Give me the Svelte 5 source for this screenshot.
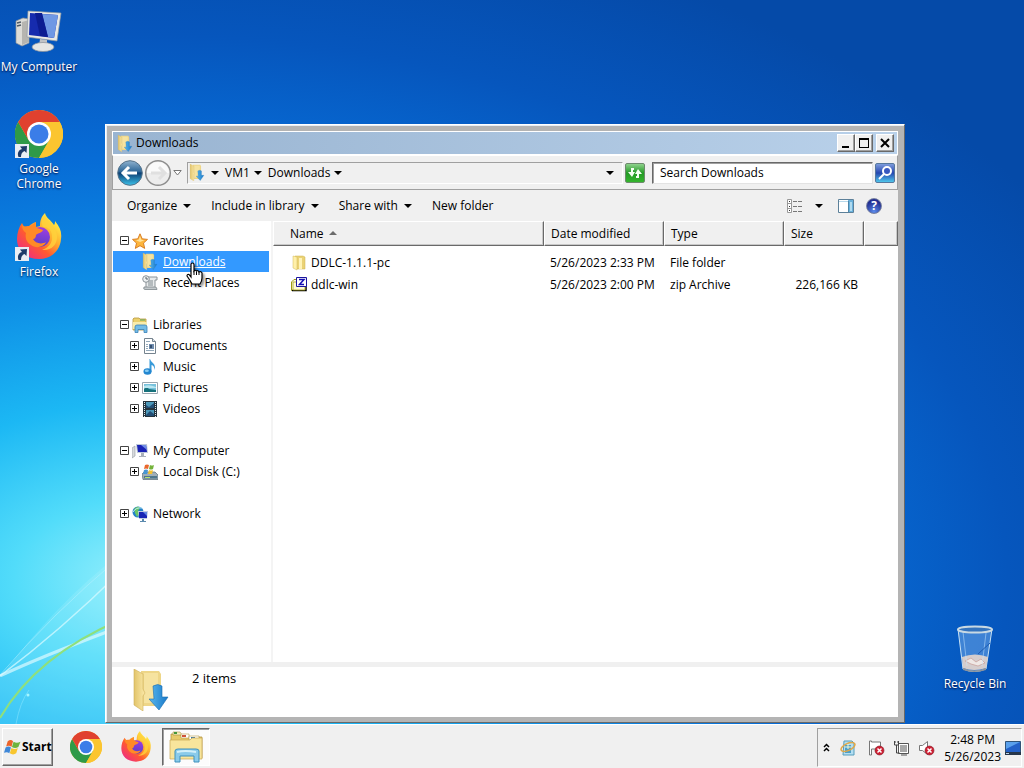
<script lang="ts">
  type TreeItem = { label: string; icon: string; toggle?: string };
  type TreeGroup = { label: string; icon: string; open: boolean; items: TreeItem[] };

  const groups: TreeGroup[] = [
    {
      label: 'Favorites', icon: 'star', open: true,
      items: [
        { label: 'Downloads', icon: 'downloads' },
        { label: 'Recent Places', icon: 'recent' }
      ]
    },
    {
      label: 'Libraries', icon: 'libraries', open: true,
      items: [
        { label: 'Documents', icon: 'document', toggle: '+' },
        { label: 'Music', icon: 'music', toggle: '+' },
        { label: 'Pictures', icon: 'picture', toggle: '+' },
        { label: 'Videos', icon: 'video', toggle: '+' }
      ]
    },
    {
      label: 'My Computer', icon: 'computer', open: true,
      items: [{ label: 'Local Disk (C:)', icon: 'disk', toggle: '+' }]
    },
    { label: 'Network', icon: 'network', open: false, items: [] }
  ];

  const files = [
    { name: 'DDLC-1.1.1-pc', icon: 'folder', date: '5/26/2023 2:33 PM', type: 'File folder', size: '' },
    { name: 'ddlc-win', icon: 'zip', date: '5/26/2023 2:00 PM', type: 'zip Archive', size: '226,166 KB' }
  ];

  let selected = $state('Downloads');
  let query = $state('');
</script>

{#snippet caret()}
  <svg class="caret" width="8" height="4" viewBox="0 0 8 4"><path d="M0 0h8L4 4z" fill="#000" /></svg>
{/snippet}

{#snippet chrome(size)}
  <svg width={size} height={size} viewBox="0 0 48 48">
    <circle cx="24" cy="24" r="24" fill="#f9c22e" />
    <path d="M3.2 12A24 24 0 0 0 24 48L34.4 30 24 24 13.6 30z" fill="#2f9a48" />
    <path d="M24 24V12h20.8A24 24 0 0 1 24 48L34.4 30z" fill="#fbc530" />
    <path d="M3.2 12A24 24 0 0 1 44.8 12H24L13.6 30z" fill="#e0412f" />
    <circle cx="24" cy="24" r="12" fill="#fff" />
    <circle cx="24" cy="24" r="9.5" fill="#3b7de8" />
  </svg>
{/snippet}

{#snippet firefox(size)}
  <svg width={size} height={size} viewBox="0 0 48 48">
    <defs>
      <linearGradient id="fx-body" x1="0.85" y1="0.1" x2="0.15" y2="0.9">
        <stop offset="0" stop-color="#fff04a" />
        <stop offset="0.35" stop-color="#ffb02e" />
        <stop offset="0.65" stop-color="#ff5a30" />
        <stop offset="1" stop-color="#f0307a" />
      </linearGradient>
      <linearGradient id="fx-globe" x1="0.6" y1="0" x2="0.4" y2="1">
        <stop offset="0" stop-color="#a03ce0" />
        <stop offset="1" stop-color="#5440c8" />
      </linearGradient>
    </defs>
    <path d="M30 0c1 5 6 7 9 12 1-1 1-3 1-4 5 6 7 11 6 18-1 13-11 20-22 20C11 46 2 38 2 26 2 20 4 14 7 10l2 4c2-1 3-1 5-1 2-2 4-3 7-4l0 5 4-1c0-5 1-9 5-13z" fill="url(#fx-body)" />
    <circle cx="25" cy="24" r="10" fill="url(#fx-globe)" />
    <path d="M7 12c3 2 5 2 8 2 2-2 4-4 6-5-1 3 0 5 1 6l6 2c-1 3-5 3-7 5 0 2-1 4-3 4 2 4 8 6 13 3-2 5-10 7-15 3-5-3-6-8-5-12-3-2-4-5-4-8z" fill="#ff8a26" />
    <path d="M30 2c-4 4-4 8-2 12 5 0 9 3 9 9 1 7-4 12-10 14 9 1 15-5 15-13 0-6-3-9-6-13-2-3-6-5-6-9z" fill="#ffd23c" opacity=".8" />
  </svg>
{/snippet}

{#snippet shortcut()}
  <svg class="shortcut" width="14" height="14" viewBox="0 0 14 14">
    <path d="M0 0h14v14H0z" fill="#e9eef4" />
    <path d="M3.500 13C2 9 3.500 6 7 5L5 2.500 12 2l-.5 7-2-2C7 8 6 10 6 13z" fill="#1c3a68" />
  </svg>
{/snippet}

{#snippet downloads(w, h)}
  <svg width={w} height={h} viewBox="0 0 36 42">
    <defs>
      <linearGradient id="dl-front" x1="0" x2="1">
        <stop offset="0" stop-color="#e2c46a" />
        <stop offset="1" stop-color="#fbe9a8" />
      </linearGradient>
      <linearGradient id="dl-arrow" x1="0" x2="1">
        <stop offset="0" stop-color="#5ab8ee" />
        <stop offset="1" stop-color="#1878c8" />
      </linearGradient>
    </defs>
    <path d="M8 2h18l2 3v32H10z" fill="#eed688" />
    <path d="M11 4h14v30H11z" fill="#f6e3a0" />
    <path d="M1 0l9 5v15l2 4-2 3v15L1 36z" fill="url(#dl-front)" stroke="#cfae58" stroke-width="0.6" />
    <path d="M20 17q5-3 9 0v11h6L26 41 16 30h5z" fill="url(#dl-arrow)" stroke="#1a6cae" stroke-width="0.6" />
  </svg>
{/snippet}

{#snippet icon(name)}
  {#if name === 'downloads'}
    {@render downloads(16, 17)}
  {:else}
    <svg width="16" height="16" viewBox="0 0 16 16">
      {#if name === 'star'}
        <path d="M8 .8l2.200 5 5.300.6-4 3.700 1.200 5.300L8 12.700l-4.700 2.700 1.200-5.300-4-3.700 5.300-.6z" fill="#fdb53c" stroke="#d5761b" stroke-width=".9" />
        <path d="M8 3l1.300 3.700 3 .5L8 9 4 7.200l2.800-.6z" fill="#ffe29a" />
      {:else if name === 'recent'}
        <path d="M5 2h10v3h-2v8H4V7z" fill="#e8ebec" stroke="#8b9398" />
        <path d="M2 12h11q2 0 2 2.500H3q-2 0-1-2.500z" fill="#c4cacd" stroke="#7d868b" stroke-width=".8" />
        <path d="M6 6h5M6 8h5M6 10h5" stroke="#818b90" />
        <circle cx="4" cy="4" r="3.300" fill="#eef1f2" stroke="#8b9398" />
        <path d="M4 2v2h2" fill="none" stroke="#59646a" />
      {:else if name === 'libraries'}
        <path d="M1 2l1-1h5l1 1h6v11H1z" fill="#ecd06c" stroke="#b89840" stroke-width=".8" />
        <path d="M1 5h14v7H1z" fill="#faecab" />
        <path d="M8 3h5" stroke="#59a560" />
        <path d="M3 15.500V10q0-2 2-2h8q2 0 2 2v5.500h-3v-3H6v3z" fill="#74bce6" stroke="#3881b7" stroke-width=".8" />
      {:else if name === 'document'}
        <path d="M2.500.5h8l3 3v12h-11z" fill="#fff" stroke="#75838e" />
        <path d="M10.500.5v3h3" fill="#dde4e9" stroke="#75838e" />
        <path d="M4 3.500h4M4 6.500h2M4 8.500h2M4 10.500h2M4 12.500h8" stroke="#93a9ba" />
        <path d="M7 6h5v5H7z" fill="#6f8cae" />
        <path d="M8 7h2v3H8z" fill="#35506f" />
      {:else if name === 'music'}
        <path d="M8 0c1 4 6.500 4 4.500 11-.2-3-1-4.500-3-5v7H7.500V0z" fill="#399bd9" />
        <ellipse cx="5.500" cy="12.500" rx="4" ry="3.300" fill="#2387d0" />
        <ellipse cx="4.800" cy="11.700" rx="2" ry="1.200" fill="#89cdf4" />
      {:else if name === 'picture'}
        <path d="M.5 2.500h15v11H.5z" fill="#fff" stroke="#9aa7b0" />
        <path d="M2 4h12v8H2z" fill="#76c1dc" />
        <path d="M2 9q3-3 5 0l7 1v2H2z" fill="#16717b" />
        <path d="M2 6q5-2 12 1v1H2z" fill="#b9e6f0" />
      {:else if name === 'video'}
        <path d="M1 0h14v16H1z" fill="#26343d" />
        <path d="M4 1h8v6H4zM4 9h8v6H4z" fill="#4b98ba" />
        <path d="M4 4l3 2 5-4v5H4zM4 14l4-4 4 3v2H4z" fill="#234e75" />
        <path d="M2.500 1v15M13.500 1v15" stroke="#dfe9ed" stroke-dasharray="1 1" />
      {:else if name === 'computer'}
        <path d="M0 5l3-2v10l-3 2z" fill="#d8dadd" stroke="#92989f" stroke-width=".6" />
        <path d="M4 1h11l1 9H5z" fill="#bdc8d9" />
        <path d="M5 2h9l1 7H6z" fill="#1a22b5" />
        <path d="M9 2h5l1 5z" fill="#708ce6" />
        <path d="M9 10h3v3h2v1H7v-1h2z" fill="#a9b0ba" />
      {:else if name === 'disk'}
        <path d="M0 10l2-2h11l3 3v4.500H1z" fill="#9faeb8" stroke="#566a77" stroke-width=".7" />
        <path d="M2 12h13v2.500H2z" fill="#4f768c" />
        <path d="M3 13.500h5" stroke="#b4e16c" />
        <path d="M3 1q2-1 4 0L6 5Q4 4 2 5z" fill="#ea672d" />
        <path d="M8 1q2 1 4 0l-1 4Q9 6 7 5z" fill="#74b33a" />
        <path d="M2 6q2-1 4 0l-1 4H1z" fill="#4896d3" />
        <path d="M7 6q2 1 4 0l-1 4H6z" fill="#f4c02d" />
      {:else if name === 'network'}
        <circle cx="6" cy="6" r="5.500" fill="#2381c9" />
        <path d="M2 3q4-4 6-1L6 5l2 2-3 4-2-4z" fill="#69c667" />
        <path d="M1 6q3-5 9-4" stroke="#bce9f6" fill="none" />
        <path d="M6 5h10l-1 8H7z" fill="#bdcbe1" />
        <path d="M7 6h8v6H7z" fill="#1726b5" />
        <path d="M11 6h4v4z" fill="#6287e3" />
        <path d="M10 13h2v2h2v1H8v-1h2z" fill="#5b8aae" />
      {:else if name === 'folder'}
        <path d="M4 1h8l2 1v12H5z" fill="#ead276" stroke="#cdb24e" stroke-width=".5" />
        <path d="M2 1l4 1v13l-4-2z" fill="#fff0a9" stroke="#d2b85b" stroke-width=".5" />
        <path d="M8 3h3v11H8z" fill="#fff3b8" />
      {:else if name === 'zip'}
        <path d="M.5 5L3 2.500h4v11H.5z" fill="#fffce2" stroke="#9e9b13" />
        <path d="M1 13.500h14V9" fill="none" stroke="#000" stroke-width="1.500" />
        <path d="M2 5h12v8H2z" fill="#fffbd1" stroke="#a5a31d" stroke-width=".8" />
        <path d="M5.500.5h10v9h-10z" fill="#fff" stroke="#1b159d" />
        <path d="M8 2.500h5L8.500 7.500H13" fill="none" stroke="#150fb5" stroke-width="1.500" />
      {/if}
    </svg>
  {/if}
{/snippet}

{#snippet toggle(sign)}
  <svg class="toggle" width="9" height="9" viewBox="0 0 9 9">
    <path d="M.5.5h8v8h-8z" fill="#fff" stroke="#444" />
    <path d={sign === '+' ? 'M2 4.500h5M4.500 2v5' : 'M2 4.500h5'} stroke="#000" />
  </svg>
{/snippet}

{#snippet flag(size)}
  <svg width={size} height={size} viewBox="0 0 16 16">
    <path d="M3.500 2q3-2 5 0L7 7.500Q5 5.500 2 7z" fill="#ec642b" />
    <path d="M9 2.500q3 2 6.500 0l-2 5q-3 2-6 0z" fill="#6fb43d" />
    <path d="M1.500 8q3-2 5 0L5 13.500q-2-2-5-.5z" fill="#3f88d8" />
    <path d="M7 8.500q3 2 6 0l-1.500 5q-3 2-6 0z" fill="#f8c62e" />
  </svg>
{/snippet}

<div class="screen">
  <main class="desktop">
    <svg class="wisps" width="240" height="240" viewBox="0 0 240 240">
      <path d="M0 194Q55 120 120 70V240H0z" fill="#c7fbff" opacity=".16" />
      <path d="M0 192Q60 147 120 88" fill="none" stroke="#d5faff" stroke-width="1.500" opacity=".75" />
      <path d="M0 191Q52 130 120 73" fill="none" stroke="#b7f2ff" opacity=".5" />
      <path d="M0 192Q40 173 120 143" fill="none" stroke="#e8fcff" stroke-width="3" opacity=".65" />
      <path d="M0 234Q36 172 120 136" fill="none" stroke="#8fe07c" stroke-width="2" />
      <path d="M16 240Q20 218 29 206" fill="none" stroke="#91eaff" opacity=".5" />
      <circle cx="28" cy="211" r="1.500" fill="#a5f6ff" />
    </svg>

    <button class="shortcut-tile computer">
      <span class="art">
        <svg width="48" height="48" viewBox="0 0 48 48">
          <path d="M1 13l7-3 6 1v24l-7 3-6-3z" fill="#dddcd7" stroke="#8e9297" stroke-width=".7" />
          <path d="M7 14v23l7-3V12z" fill="#b6b5b0" />
          <path d="M2 15l4-1M2 18l4-1" stroke="#4e5965" stroke-width="1.500" />
          <path d="M13 3l33 2-4 28-30-4z" fill="#e9e9e5" stroke="#9199a2" stroke-width=".7" />
          <path d="M15 5l28 2-4 23-25-3z" fill="#162bae" />
          <path d="M27 6l16 1-4 23-6-1z" fill="#6f98e4" />
          <path d="M20 5h7l6 24-8-1z" fill="#0c1c91" />
          <path d="M25 31l7 1v6h-8z" fill="#bfc2c5" />
          <ellipse cx="28" cy="39" rx="11" ry="4.500" fill="#e5e6e4" stroke="#888e96" stroke-width=".7" />
        </svg>
      </span>
      <span>My Computer</span>
    </button>
    <button class="shortcut-tile google">
      <span class="art">{@render chrome(48)}{@render shortcut()}</span>
      <span>Google<br />Chrome</span>
    </button>
    <button class="shortcut-tile fox">
      <span class="art">{@render firefox(48)}{@render shortcut()}</span>
      <span>Firefox</span>
    </button>
    <button class="shortcut-tile bin">
      <span class="art">
        <svg width="48" height="48" viewBox="0 0 48 48">
          <path d="M7 4l5 40q11 5 23 0l6-40z" fill="#6ea5e5" fill-opacity=".55" stroke="#c8e2f4" />
          <path d="M11 32q13-5 26 0l-2 11q-12 4-23 0z" fill="#d5cdcd" />
          <path d="M14 36l6-3 5 4 5-3 4 4-7 3-7-2z" fill="#efe8e5" stroke="#c79c96" stroke-width=".7" />
          <path d="M12 7l4 34M35 8l-4 33" stroke="#c8e8ff" opacity=".5" />
          <path d="M27 29L39 18" stroke="#1c5bb2" />
          <ellipse cx="24" cy="4.500" rx="17" ry="3" fill="#3473bd" stroke="#c9d9e3" stroke-width="2" />
          <path d="M12 43q12 5 23 0v2q-12 4-23 0z" fill="#8b929a" />
        </svg>
      </span>
      <span>Recycle Bin</span>
    </button>

    <section class="window" aria-label="Downloads">
      <header class="titlebar">
        {@render downloads(16, 17)}
        <h1>Downloads</h1>
        <button aria-label="Minimize"><svg width="12" height="12" viewBox="0 0 12 12"><path d="M2 9h7v2H2z" /></svg></button>
        <button aria-label="Maximize"><svg width="12" height="12" viewBox="0 0 12 12"><path d="M1 1h10v10H1zM2 3v7h8V3z" fill-rule="evenodd" /></svg></button>
        <button class="close" aria-label="Close"><svg width="12" height="12" viewBox="0 0 12 12"><path d="M2 2l8 8M10 2l-8 8" stroke="#000" stroke-width="2" /></svg></button>
      </header>

      <nav class="navbar">
        <div class="travel">
          <button aria-label="Back">
            <svg width="26" height="26" viewBox="0 0 26 26">
              <defs>
                <linearGradient id="back-fill" x2="0" y2="1">
                  <stop offset="0" stop-color="#8fb2cf" />
                  <stop offset=".45" stop-color="#2c6697" />
                  <stop offset=".5" stop-color="#0c3f73" />
                  <stop offset="1" stop-color="#3cc1ea" />
                </linearGradient>
              </defs>
              <circle cx="13" cy="13" r="12.300" fill="url(#back-fill)" stroke="#547188" />
              <path d="M12 7l-6 6 6 6M7 13h13" fill="none" stroke="#fff" stroke-width="3" />
            </svg>
          </button>
          <button aria-label="Forward">
            <svg width="28" height="28" viewBox="0 0 28 28">
              <circle cx="14" cy="14" r="12.300" fill="#ededed" stroke="#8e8e8e" stroke-width="1.500" />
              <path d="M3 14a11 11 0 0 1 22 0z" fill="#fafafa" />
              <path d="M15 8l6 6-6 6M20 14H7" fill="none" stroke="#e0e0e0" stroke-width="3" />
            </svg>
          </button>
          <button aria-label="Recent pages">
            <svg width="9" height="6" viewBox="0 0 9 6"><path d="M.8.5h7.400L4.500 5z" fill="#fff" stroke="#777" /></svg>
          </button>
        </div>
        <div class="address">
          {@render downloads(16, 17)}
          <button aria-label="Locations">{@render caret()}</button>
          <button>VM1 {@render caret()}</button>
          <button>Downloads {@render caret()}</button>
          <button class="history" aria-label="Previous locations">{@render caret()}</button>
        </div>
        <button class="refresh" aria-label="Refresh">
          <svg width="18" height="18" viewBox="0 0 18 18">
            <path d="M8 4H5v4H2l4 5 3-5H7V6h1z" fill="#f4fff2" />
            <path d="M10 14h3v-4h3l-4-5-3 5h2v2h-1z" fill="#f4fff2" />
          </svg>
        </button>
        <input type="search" aria-label="Search Downloads" placeholder="Search Downloads" bind:value={query} />
        <button class="find" aria-label="Search">
          <svg width="18" height="18" viewBox="0 0 18 18">
            <circle cx="11" cy="7" r="4" fill="#3858c0" stroke="#fff" stroke-width="2" />
            <path d="M8 10l-5 5" stroke="#fff" stroke-width="2" />
          </svg>
        </button>
      </nav>

      <div class="toolbar">
        <button>Organize {@render caret()}</button>
        <button>Include in library {@render caret()}</button>
        <button>Share with {@render caret()}</button>
        <button>New folder</button>
        <button class="view" aria-label="Change your view">
          <svg width="16" height="14" viewBox="0 0 16 14">
            <path d="M.5.500h4v13h-4zM.500 4.500h4M.500 9.500h4" fill="#fff" stroke="#999" />
            <path d="M2 2.500h1M2 7.500h1M2 11.500h1" stroke="#333" />
            <path d="M6 2.500h4M11 2.500h4M6 7.500h4M11 7.500h4M6 12.500h4M11 12.500h4" stroke="#777" />
          </svg>
          {@render caret()}
        </button>
        <button class="preview" aria-label="Show the preview pane">
          <svg width="16" height="14" viewBox="0 0 16 14">
            <path d="M.5.500h15v13H.5z" fill="#fff" stroke="#5c8099" />
            <path d="M1 2.500h9" stroke="#b7d8ea" />
            <path d="M10 1h5v12h-5z" fill="#69b1dc" />
            <path d="M10.500 2v11" stroke="#4e86a8" />
            <path d="M12 3h2v9h-2z" fill="#b0dbf0" />
          </svg>
        </button>
        <button class="help" aria-label="Help">
          <span>?</span>
        </button>
      </div>

      <div class="panes">
        <aside class="sidebar">
          <ul>
            {#each groups as group}
              <li class="group">
                <button class="node">
                  {@render toggle(group.open ? '-' : '+')}
                  {@render icon(group.icon)}
                  <span>{group.label}</span>
                </button>
                {#if group.items.length}
                  <ul>
                    {#each group.items as item}
                      <li>
                        <button class="node child" class:selected={selected === item.label} onclick={() => (selected = item.label)}>
                          {#if item.toggle}{@render toggle(item.toggle)}{:else}<i class="toggle"></i>{/if}
                          {@render icon(item.icon)}
                          <span>{item.label}</span>
                        </button>
                      </li>
                    {/each}
                  </ul>
                {/if}
              </li>
            {/each}
          </ul>
        </aside>

        <div class="listing">
          <table>
            <colgroup>
              <col class="name-col" />
              <col class="wide-col" />
              <col class="wide-col" />
              <col class="size-col" />
              <col />
            </colgroup>
            <thead>
              <tr>
                <th>Name <svg class="sort" width="8" height="4" viewBox="0 0 8 4"><path d="M4 0l4 4H0z" fill="#6b6b6b" /></svg></th>
                <th>Date modified</th>
                <th>Type</th>
                <th>Size</th>
                <td></td>
              </tr>
            </thead>
            <tbody>
              {#each files as file}
                <tr>
                  <td><span class="file">{@render icon(file.icon)}{file.name}</span></td>
                  <td>{file.date}</td>
                  <td>{file.type}</td>
                  <td class="size">{file.size}</td>
                  <td></td>
                </tr>
              {/each}
            </tbody>
          </table>
        </div>
      </div>

      <footer class="details">
        {@render downloads(36, 42)}
        <p>{files.length} items</p>
      </footer>
    </section>

    <svg class="pointer" width="19" height="24" viewBox="0 0 19 24">
      <path d="M5 15V2.500Q5 1 6.500 1T8 2.500V9q1-1.500 2.500 0Q12 8 13 10q2-1 3 1v5q0 3-2 6H6Q4 18 1 14q0-2 2-1.500z" fill="#fff" stroke="#000" stroke-width="1.200" />
      <path d="M8 9v4M10.500 9.500V13M13 10v3" stroke="#000" />
    </svg>
  </main>

  <footer class="taskbar">
    <button class="start">{@render flag(17)}Start</button>
    <button class="task" aria-label="Google Chrome">{@render chrome(32)}</button>
    <button class="task" aria-label="Firefox">{@render firefox(32)}</button>
    <button class="task active" aria-label="Windows Explorer">
      <svg width="34" height="32" viewBox="0 0 34 32">
        <path d="M2 3h9l2 3h20v21H2z" fill="#e8cb6b" stroke="#b69743" stroke-width=".8" />
        <path d="M4 1h7l2 3H4z" fill="#f6efbc" stroke="#a68f40" stroke-width=".6" />
        <path d="M5 2h3" stroke="#44963a" stroke-width="2" />
        <path d="M12 3h8v4h-8z" fill="#fff" stroke="#b69743" stroke-width=".6" />
        <path d="M13 5h4" stroke="#ce533b" stroke-width="2" />
        <path d="M20 5h10v4H20z" fill="#fff" stroke="#b69743" stroke-width=".6" />
        <path d="M22 7h4" stroke="#3979a9" stroke-width="2" />
        <path d="M1 9h20l2-2h10v21H1z" fill="#f8e59c" stroke="#c7a853" stroke-width=".7" />
        <path d="M6 31V20q0-2 3-2h18q3 0 3 2v11h-5v-6H11v6z" fill="#8acbea" stroke="#3f91bd" />
        <path d="M8 21q8-2 19 0" fill="none" stroke="#d3f0fa" stroke-width="2" />
      </svg>
    </button>

    <div class="tray">
      <button aria-label="Show hidden icons">
        <svg width="7" height="9" viewBox="0 0 7 9"><path d="M1 4l2.500-2.500L6 4M1 8l2.500-2.500L6 8" fill="none" stroke="#000" stroke-width="1.500" /></svg>
      </button>
      <button class="first" aria-label="Updates">
        <svg width="16" height="16" viewBox="0 0 16 16">
          <path d="M4 1h8l2 2v12H3z" fill="#b4def1" stroke="#559dbc" />
          <path d="M5 5h6v8H5z" fill="#4c9fca" />
          <ellipse cx="8" cy="7" rx="7.500" ry="3.500" transform="rotate(-25 8 7)" fill="none" stroke="#dfa849" stroke-width="1.500" />
          <path d="M8 4v5M5 7h6" stroke="#f3f8d0" />
        </svg>
      </button>
      <button aria-label="Action Center">
        <svg width="17" height="16" viewBox="0 0 17 16">
          <path d="M1.500 1v14h2V9h9V2h-9V1z" fill="#fff" stroke="#777" />
          <circle cx="11.500" cy="10.500" r="4.500" fill="#ce1e32" stroke="#7f202a" stroke-width=".6" />
          <path d="M9.500 8.500l4 4m0-4l-4 4" stroke="#fff" stroke-width="1.500" />
        </svg>
      </button>
      <button aria-label="Network">
        <svg width="17" height="16" viewBox="0 0 17 16">
          <path d="M5.500 3.500h10v10h-10zM8 15h6" fill="#fff" stroke="#555" />
          <path d="M7 5h7v7H7z" fill="#a8a8a8" />
          <path d="M1.500 1v4h4V1M3.500 5v8h3M2 1v2M5 1v2" fill="none" stroke="#444" />
        </svg>
      </button>
      <button aria-label="Volume">
        <svg width="17" height="16" viewBox="0 0 17 16">
          <path d="M1.500 5.500h3l5-4v13l-5-4h-3z" fill="#fff" stroke="#777" />
          <circle cx="11.500" cy="10.500" r="4.500" fill="#ce1e32" stroke="#7f202a" stroke-width=".6" />
          <path d="M9.500 8.500l4 4m0-4l-4 4" stroke="#fff" stroke-width="1.500" />
        </svg>
      </button>
      <time datetime="2023-05-26T14:48">2:48 PM<br />5/26/2023</time>
      <button aria-label="Show desktop">
        <svg width="16" height="14" viewBox="0 0 16 14">
          <path d="M.5.500h15v11H.5z" fill="#2361c8" stroke="#315478" />
          <path d="M1 1h14L1 8z" fill="#5aa0ec" />
          <path d="M0 11h16v3H0z" fill="#26364a" />
          <path d="M1 12.500h3" stroke="#bcd5ec" />
        </svg>
      </button>
    </div>
  </footer>
</div>

<style>
  :global(body) {
    margin: 0;
  }
  .screen {
    display: flex;
    flex-direction: column;
    min-height: 100vh;
    overflow: hidden;
    color: #000;
    font: 12px/16px "Segoe UI", "Open Sans", "Noto Sans", sans-serif;
  }
  .screen * {
    box-sizing: border-box;
  }
  svg {
    display: block;
    flex: none;
  }
  button {
    display: flex;
    align-items: center;
    margin: 0;
    padding: 0;
    border: 0;
    background: none;
    color: inherit;
    font: inherit;
    white-space: nowrap;
  }

  /* desktop */
  .desktop {
    position: relative;
    flex: 1;
    overflow: hidden;
    background: radial-gradient(ellipse 1080px 680px at 14% 80%, #98f0fc 0%, #52dcfa 12%, #1cb8f4 26%, #0e90e6 42%, #076cd6 62%, #0656bd 80%, #054aa8 100%);
  }
  .wisps {
    position: absolute;
    left: 0;
    bottom: 0;
    width: 240px;
    height: 240px;
  }
  .shortcut-tile {
    position: absolute;
    flex-direction: column;
    width: 78px;
    color: #fff;
    line-height: 15px;
    text-align: center;
    text-shadow: 0 1px 2px #003;
  }
  .art {
    position: relative;
    margin-bottom: 3px;
  }
  .shortcut {
    position: absolute;
    left: 0;
    bottom: 0;
  }
  .computer {
    left: 0;
    top: 8px;
  }
  .google {
    left: 0;
    top: 110px;
  }
  .fox {
    left: 0;
    top: 213px;
  }
  .bin {
    right: 10px;
    top: 625px;
  }

  /* explorer window */
  .window {
    position: absolute;
    inset: 124px 119px 1px 105px;
    display: flex;
    flex-direction: column;
    padding: 6px 6px 5px;
    border: 1px solid #fff;
    border-right-color: #696969;
    border-bottom-color: #696969;
    background: #b4b4b4;
    box-shadow: inset 1px 1px #e8eef4;
  }
  .titlebar {
    display: flex;
    align-items: center;
    height: 24px;
    padding: 0 3px 0 4px;
    border: 1px solid #fff;
    background: linear-gradient(90deg, #99b4d1, #b9d1ea);
  }
  .titlebar h1 {
    flex: 1;
    margin: 0 0 0 3px;
    font-size: 12px;
    font-weight: 400;
  }
  .titlebar button {
    justify-content: center;
    width: 18px;
    height: 18px;
    border: 1px solid #fff;
    border-right-color: #696969;
    border-bottom-color: #696969;
    background: #f0f0f0;
    box-shadow: inset -1px -1px #a0a0a0;
  }
  .titlebar .close {
    margin-left: 3px;
  }
  .navbar {
    display: flex;
    align-items: center;
    height: 35px;
    padding: 0 2px 0 4px;
    border: 1px solid #a0a0a0;
    border-top-color: #fff;
    background: #f0f0f0;
  }
  .travel {
    display: flex;
    align-items: center;
    width: 70px;
    gap: 1px;
  }
  .address {
    display: flex;
    flex: 1;
    align-items: center;
    gap: 6px;
    height: 22px;
    padding: 0 8px 0 1px;
    border: 1px solid #a0a0a0;
    border-right-color: #fff;
    border-bottom-color: #fff;
  }
  .address button {
    gap: 4px;
  }
  .address .history {
    margin-left: auto;
  }
  .refresh,
  .find {
    justify-content: center;
    width: 20px;
    height: 20px;
    margin-left: 2px;
    border: 1px solid #6d8a6d;
    border-radius: 2px;
    background: linear-gradient(#8ed28c, #239a25 50%, #35b52e);
  }
  .find {
    border-color: #56789e;
    background: linear-gradient(#7d9bdc, #2546b0 50%, #4fc5ea);
  }
  input {
    flex: 0 1 221px;
    min-width: 0;
    height: 22px;
    margin-left: 7px;
    padding: 0 7px;
    border: 1px solid #e3e3e3;
    border-top-color: #696969;
    border-left-color: #696969;
    border-radius: 0;
    background: #fff;
    box-shadow: inset 1px 1px #a0a0a0;
    color: #000;
    font: inherit;
    outline: 0;
    appearance: none;
  }
  input::placeholder {
    color: #000;
    opacity: 1;
  }
  .toolbar {
    display: flex;
    align-items: center;
    gap: 20px;
    height: 31px;
    padding: 0 16px 0 15px;
    background: #f0f0f0;
  }
  .toolbar button {
    gap: 6px;
  }
  .toolbar .view {
    gap: 12px;
    margin-left: auto;
  }
  .toolbar .preview {
    margin-left: -5px;
  }
  .toolbar .help {
    justify-content: center;
    width: 16px;
    height: 16px;
    margin-left: -8px;
    border: 1px solid #76809f;
    border-radius: 50%;
    background: radial-gradient(circle at 50% 90%, #5b8bea, #232f92 70%);
    color: #fff;
    font-weight: 700;
  }
  .panes {
    display: flex;
    flex: 1;
    min-height: 0;
    background: #fff;
  }

  /* folder tree */
  .sidebar {
    width: 161px;
    padding: 9px 2px 0 1px;
    border-right: 2px solid #f4f4f4;
  }
  .sidebar ul {
    margin: 0;
    padding: 0;
    list-style: none;
  }
  .group {
    margin-bottom: 21px;
  }
  .node {
    gap: 4px;
    width: 100%;
    height: 21px;
    padding-left: 7px;
  }
  .child {
    padding-left: 17px;
  }
  .toggle {
    flex: none;
    width: 9px;
    margin-right: -1px;
  }
  .node span {
    margin-left: 1px;
  }
  .selected {
    background: #3399ff;
    color: #fff;
  }
  .selected span {
    text-decoration: underline;
  }

  /* file list */
  .listing {
    flex: 1;
    min-width: 0;
  }
  table {
    width: 100%;
    border-spacing: 0;
    table-layout: fixed;
  }
  .name-col {
    width: 271px;
  }
  .wide-col {
    width: 120px;
  }
  .size-col {
    width: 80px;
  }
  thead th,
  thead td {
    height: 25px;
    padding: 0 6px;
    border: 1px solid #fff;
    border-right-color: #696969;
    border-bottom-color: #696969;
    background: #f0f0f0;
    box-shadow: inset -1px -1px #c8c8c8;
    font-weight: 400;
    text-align: left;
  }
  thead th:first-child {
    padding-left: 16px;
  }
  .sort {
    display: inline-block;
    margin: 0 0 3px 2px;
  }
  tbody::before {
    display: block;
    height: 6px;
    content: "";
  }
  tbody td {
    height: 22px;
    padding: 0 6px;
    white-space: nowrap;
  }
  tbody td:first-child {
    padding-left: 18px;
  }
  .file {
    display: flex;
    align-items: center;
    gap: 4px;
  }
  .size {
    text-align: right;
  }
  .details {
    display: flex;
    height: 55px;
    padding: 2px 21px;
    border-top: 5px solid #f0f0f0;
    background: #fff;
  }
  .details p {
    margin: 1px 0 0 23px;
    font-size: 13px;
  }
  .pointer {
    position: absolute;
    left: 186px;
    top: 262px;
    filter: drop-shadow(2px 2px 1px #0006);
    pointer-events: none;
  }

  /* taskbar */
  .taskbar {
    display: flex;
    height: 44px;
    padding: 3px 2px 1px;
    border-top: 1px solid #fff;
    background: #f0f0f0;
  }
  .start {
    gap: 1px;
    width: 51px;
    height: 38px;
    margin-right: 9px;
    padding-left: 1px;
    border: 1px solid #fff;
    border-right-color: #696969;
    border-bottom-color: #696969;
    box-shadow: inset -1px -1px #a0a0a0;
    font-weight: 700;
  }
  .task {
    justify-content: center;
    width: 48px;
    height: 38px;
    margin-right: 2px;
  }
  .task.active {
    border: 1px solid #696969;
    border-right-color: #fff;
    border-bottom-color: #fff;
    background: #fcfcfc;
    box-shadow: inset 1px 1px #a0a0a0;
  }
  .tray {
    display: flex;
    align-items: center;
    gap: 8px;
    margin-left: auto;
    padding-left: 5px;
    border: 1px solid #a0a0a0;
    border-right-color: #fff;
    border-bottom-color: #fff;
  }
  .tray .first {
    margin: 0 4px 0 2px;
  }
  .tray time {
    margin: 0 -4px 0 1px;
    line-height: 17px;
    text-align: center;
  }
</style>
